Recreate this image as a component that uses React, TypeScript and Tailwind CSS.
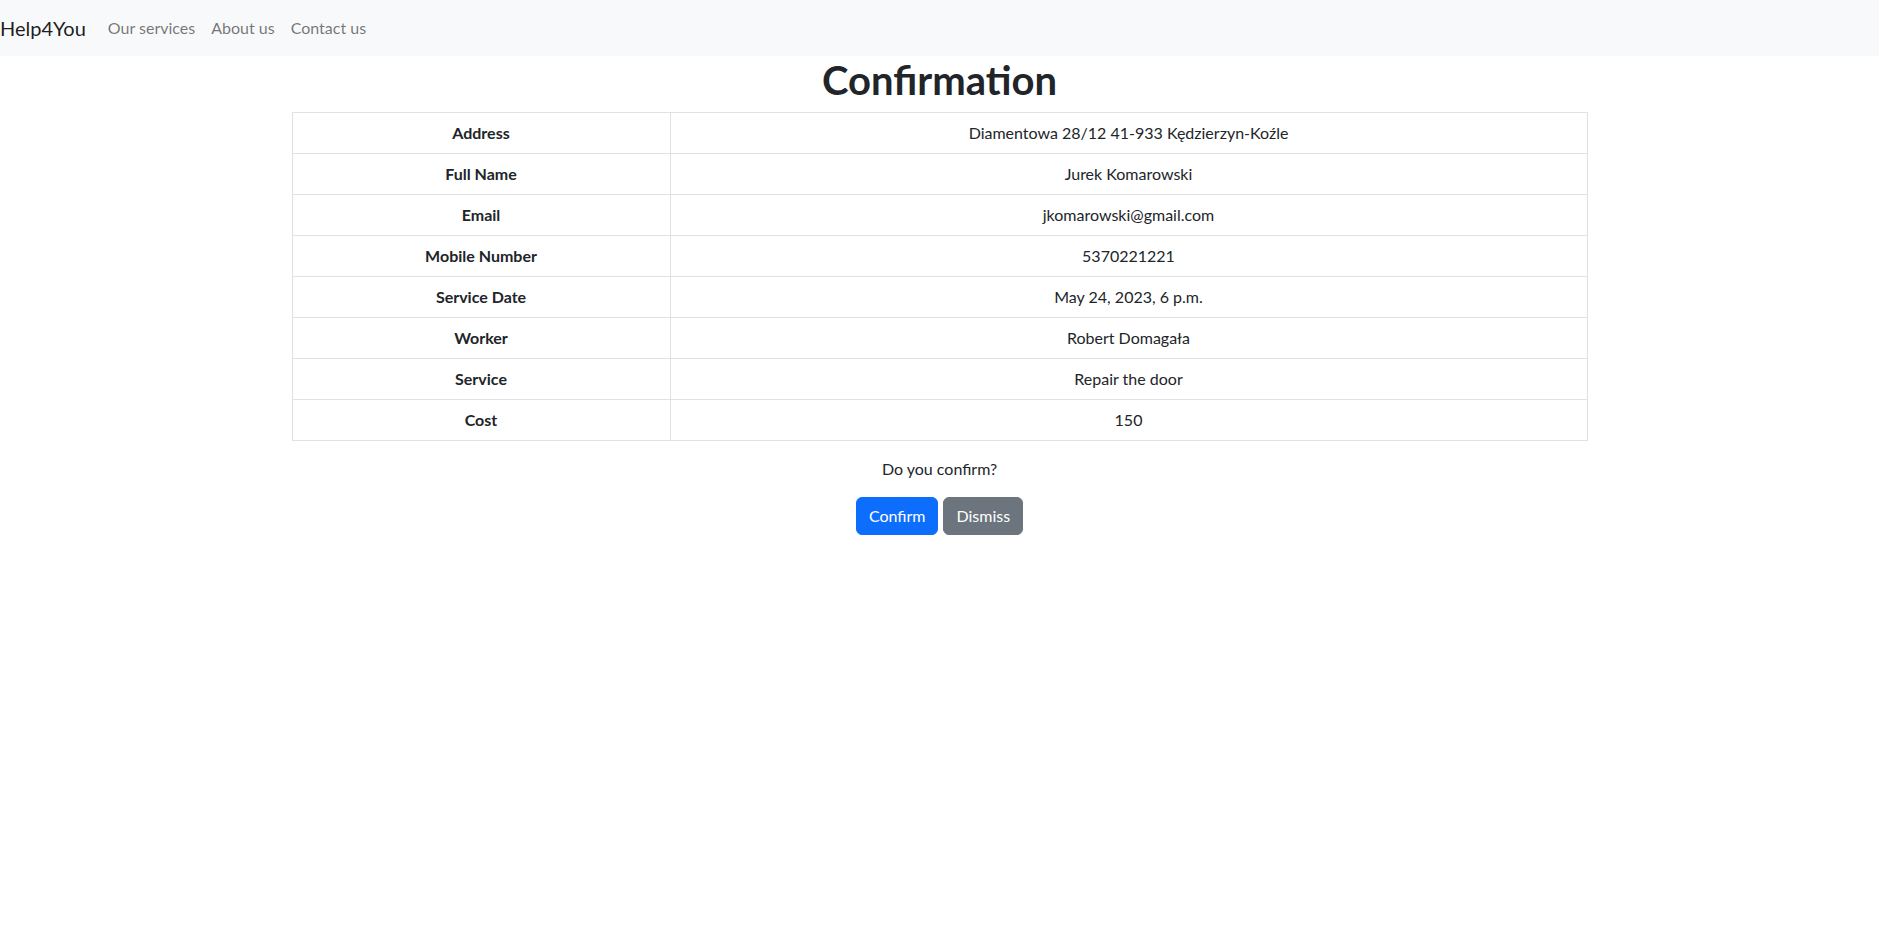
import React from "react";

const rows: [string, string][] = [
  ["Address", "Diamentowa 28/12 41-933 Kędzierzyn-Koźle"],
  ["Full Name", "Jurek Komarowski"],
  ["Email", "jkomarowski@gmail.com"],
  ["Mobile Number", "5370221221"],
  ["Service Date", "May 24, 2023, 6 p.m."],
  ["Worker", "Robert Domagała"],
  ["Service", "Repair the door"],
  ["Cost", "150"],
];

export default function App() {
  return (
    <div className="min-h-[931px] bg-white text-[#212529] font-['Lato','Noto_Sans',sans-serif] text-base leading-6">
      <nav className="h-[56px] bg-[#f8f9fa] flex items-center">
        <a className="text-[20px] leading-[30px] mr-[14px] text-[rgba(0,0,0,0.9)]">Help4You</a>
        <ul className="flex">
          <li className="px-2 text-[rgba(0,0,0,0.55)]">Our services</li>
          <li className="px-2 text-[rgba(0,0,0,0.55)]">About us</li>
          <li className="px-2 text-[rgba(0,0,0,0.55)]">Contact us</li>
        </ul>
      </nav>
      <div className="max-w-[1320px] mx-auto px-3">
        <h1 className="text-center text-[40px] leading-[48px] font-bold mb-2">Confirmation</h1>
        <table className="w-full border-collapse mb-4">
          <tbody>
            {rows.map(([k, v]) => (
              <tr key={k}>
                <th className="border border-[#dee2e6] px-2 py-2 font-bold text-center w-[378px]">{k}</th>
                <td className="border border-[#dee2e6] px-2 py-2 text-center">{v}</td>
              </tr>
            ))}
          </tbody>
        </table>
        <p className="text-center mb-4">Do you confirm?</p>
        <div className="flex justify-center gap-[5px]">
          <button className="bg-[#0d6efd] border border-[#0d6efd] text-white rounded-[6px] px-3 py-[6px] leading-6">Confirm</button>
          <button className="bg-[#6c757d] border border-[#6c757d] text-white rounded-[6px] px-3 py-[6px] leading-6">Dismiss</button>
        </div>
      </div>
    </div>
  );
}
